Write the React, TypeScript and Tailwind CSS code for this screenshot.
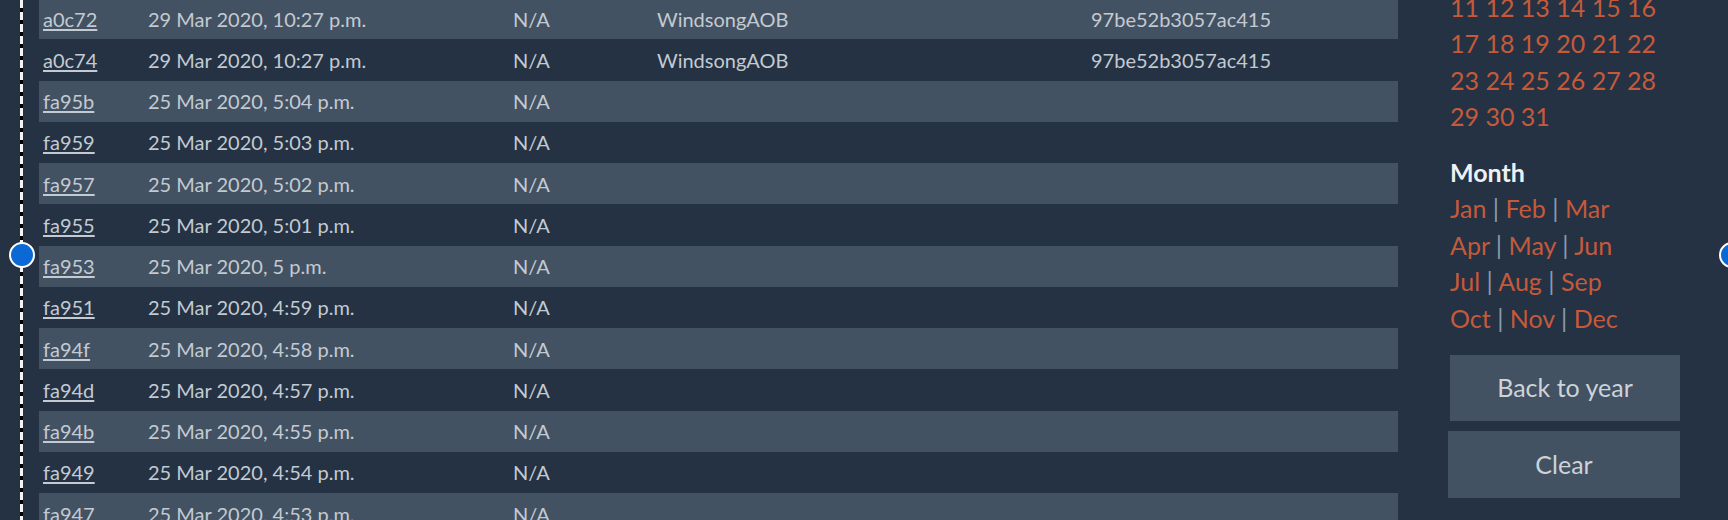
import React from 'react'

type Row = {
  id: string
  date: string
  name?: string
  hash?: string
}

const rows: Row[] = [
  { id: 'a0c72', date: '29 Mar 2020, 10:27 p.m.', name: 'WindsongAOB', hash: '97be52b3057ac415' },
  { id: 'a0c74', date: '29 Mar 2020, 10:27 p.m.', name: 'WindsongAOB', hash: '97be52b3057ac415' },
  { id: 'fa95b', date: '25 Mar 2020, 5:04 p.m.' },
  { id: 'fa959', date: '25 Mar 2020, 5:03 p.m.' },
  { id: 'fa957', date: '25 Mar 2020, 5:02 p.m.' },
  { id: 'fa955', date: '25 Mar 2020, 5:01 p.m.' },
  { id: 'fa953', date: '25 Mar 2020, 5 p.m.' },
  { id: 'fa951', date: '25 Mar 2020, 4:59 p.m.' },
  { id: 'fa94f', date: '25 Mar 2020, 4:58 p.m.' },
  { id: 'fa94d', date: '25 Mar 2020, 4:57 p.m.' },
  { id: 'fa94b', date: '25 Mar 2020, 4:55 p.m.' },
  { id: 'fa949', date: '25 Mar 2020, 4:54 p.m.' },
  { id: 'fa947', date: '25 Mar 2020, 4:53 p.m.' },
]

const dayLines = [
  [11, 12, 13, 14, 15, 16],
  [17, 18, 19, 20, 21, 22],
  [23, 24, 25, 26, 27, 28],
  [29, 30, 31],
]

const monthLines = [
  ['Jan', 'Feb', 'Mar'],
  ['Apr', 'May', 'Jun'],
  ['Jul', 'Aug', 'Sep'],
  ['Oct', 'Nov', 'Dec'],
]

const Handle = ({ className }: { className: string }) => (
  <div
    className={`absolute w-[26px] h-[26px] rounded-full bg-[#0b69d6] border-[2.5px] border-white ${className}`}
  />
)

export default function App() {
  return (
    <div
      className="relative flex w-[1728px] h-[520px] overflow-hidden bg-[#243244]"
      style={{ fontFamily: 'Lato, "Open Sans", sans-serif' }}
    >
      {/* timeline gutter */}
      <div className="relative w-[39px] shrink-0">
        <div className="absolute left-[20px] top-0 h-full w-[3px] bg-[repeating-linear-gradient(to_bottom,#f4f4f4_0px,#f4f4f4_8px,#000_8px,#000_12px)]" />
      </div>

      {/* commit table */}
      <div className="w-[1359px] shrink-0 -mt-[2px]">
        {rows.map((r, i) => (
          <div
            key={r.id}
            className={`grid grid-cols-[105px_365px_144px_434px_1fr] items-center h-[41.25px] pl-[4px] text-[20px] text-[#c3cad1] ${
              i % 2 === 0 ? 'bg-[#435263]' : 'bg-[#243244]'
            }`}
          >
            <a className="underline underline-offset-[2px] decoration-[1.5px] cursor-pointer">{r.id}</a>
            <span>{r.date}</span>
            <span>N/A</span>
            <span>{r.name ?? ''}</span>
            <span>{r.hash ?? ''}</span>
          </div>
        ))}
      </div>

      {/* date filter */}
      <div className="flex-1 pl-[52px] -mt-[11.5px] text-[25px] leading-[36.5px]">
        <div className="text-[#c45a3a]">
          {dayLines.map((line, i) => (
            <div key={i} className="whitespace-nowrap">
              {line.map((d, j) => (
                <span key={d}>
                  {j > 0 && ' '}
                  <a className="cursor-pointer">{d}</a>
                </span>
              ))}
            </div>
          ))}
        </div>

        <h3 className="mt-[19px] font-bold text-[#eef1f4]">Month</h3>
        <div>
          {monthLines.map((line, i) => (
            <div key={i} className="whitespace-nowrap">
              {line.map((m, j) => (
                <span key={m}>
                  {j > 0 && <span className="text-[#8a9aac]"> | </span>}
                  <a className="text-[#c45a3a] cursor-pointer">{m}</a>
                </span>
              ))}
            </div>
          ))}
        </div>

        <div className="mt-[18.5px] flex flex-col gap-[10px] w-[230px]">
          <button className="h-[66px] bg-[#435263] text-[#cdd3d9] text-[25px]">Back to year</button>
          <button className="h-[67px] -ml-[2px] bg-[#435263] text-[#cdd3d9] text-[25px]">Clear</button>
        </div>
      </div>

      <Handle className="left-[9px] top-[242px]" />
      <Handle className="left-[1719px] top-[242px]" />
    </div>
  )
}
